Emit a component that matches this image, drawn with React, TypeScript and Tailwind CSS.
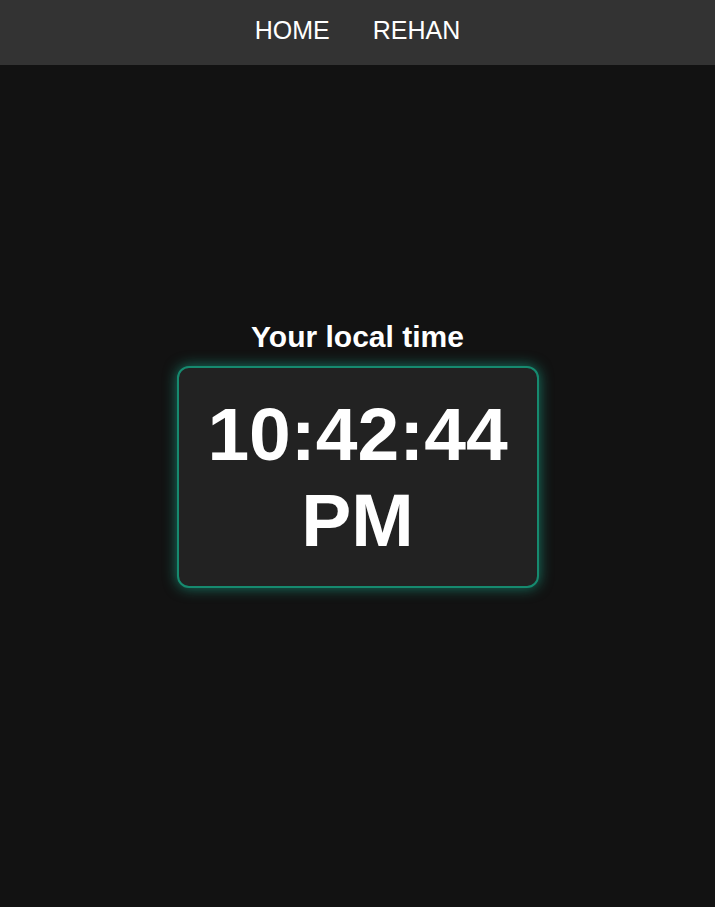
import React, { useState } from 'react';

const App: React.FC = () => {
  // fixed time so the screenshot is stable
  const [time] = useState('10:42:44 PM');

  return (
    <div className="min-h-screen bg-[#121212] text-white font-['Liberation_Sans',Arial,sans-serif]">
      <header className="fixed top-0 inset-x-0 h-[65px] bg-[#333333] flex items-center justify-center gap-[43px] pb-[3px]">
        <a href="#" className="text-[25px] text-white">HOME</a>
        <a href="#" className="text-[25px] text-white">REHAN</a>
      </header>
      <main className="min-h-screen flex flex-col items-center justify-center pb-[5px]">
        <h2 className="text-[30px] font-bold mb-[7px]">Your local time</h2>
        <div className="w-[362px] h-[222px] rounded-xl bg-[#222222] border-2 border-[#168a6f] shadow-[0_0_14px_rgba(26,188,156,0.6)] flex items-center justify-center text-center">
          <div className="text-[75px] leading-[86px] font-bold">{time}</div>
        </div>
      </main>
    </div>
  );
};

export default App;
